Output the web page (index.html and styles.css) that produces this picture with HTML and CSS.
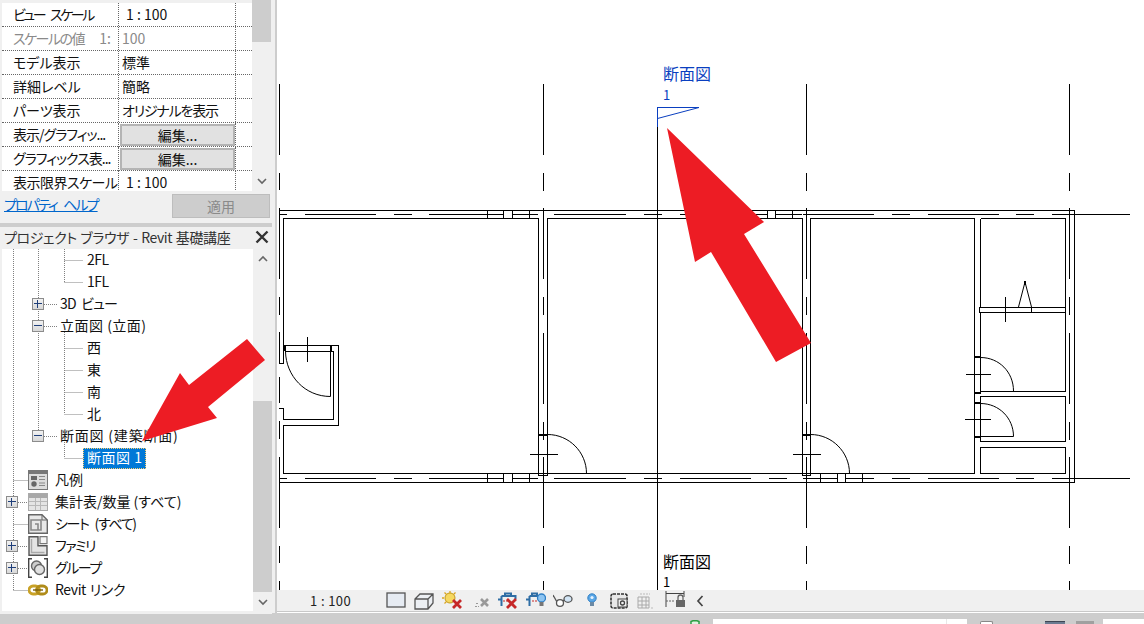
FILE: index.html
```html
<!DOCTYPE html>
<html lang="ja">
<head>
<meta charset="utf-8">
<title>Revit 断面図</title>
<link rel="stylesheet" href="styles.css">
</head>
<body>
<div class="layout">
  <aside class="side">
    <section class="props">
      <div class="prop-table">
        <div class="prop-row"><div class="prop-name ls-w24">ビュー スケール</div><div class="prop-value indent">1 : 100</div><div class="prop-extra"></div></div>
        <div class="prop-row muted"><div class="prop-name split"><span class="ls-15">スケールの値</span><span>1:</span></div><div class="prop-value">100</div><div class="prop-extra"></div></div>
        <div class="prop-row"><div class="prop-name">モデル表示</div><div class="prop-value">標準</div><div class="prop-extra"></div></div>
        <div class="prop-row"><div class="prop-name">詳細レベル</div><div class="prop-value">簡略</div><div class="prop-extra"></div></div>
        <div class="prop-row"><div class="prop-name">パーツ表示</div><div class="prop-value ls-12">オリジナルを表示</div><div class="prop-extra"></div></div>
        <div class="prop-row"><div class="prop-name ls-10">表示/グラフィッ...</div><div class="prop-value cell-btn"><button class="edit-btn">編集...</button></div><div class="prop-extra"></div></div>
        <div class="prop-row"><div class="prop-name ls-10">グラフィックス表...</div><div class="prop-value cell-btn"><button class="edit-btn">編集...</button></div><div class="prop-extra"></div></div>
        <div class="prop-row"><div class="prop-name ls-05">表示限界スケール</div><div class="prop-value indent">1 : 100</div><div class="prop-extra"></div></div>
      </div>
      <div class="prop-scroll">
        <div class="thumb-top"></div>
        <svg class="chev" width="12" height="8" viewBox="0 0 12 8"><path d="M2 2l4 4 4-4" fill="none" stroke="#666" stroke-width="1.6"/></svg>
      </div>
    </section>
    <div class="prop-actions">
      <a class="help-link ls-w18" href="#">プロパティ ヘルプ</a>
      <button class="apply-btn">適用</button>
    </div>
    <div class="divider"></div>
    <header class="browser-title">
      <span class="ls-w03">プロジェクト ブラウザ - Revit 基礎講座</span>
      <svg width="14" height="14" viewBox="0 0 14 14"><path d="M1.5 1.5l11 11M12.5 1.5l-11 11" stroke="#333" stroke-width="2.4"/></svg>
    </header>
    <div class="browser">
      <div class="tree">
        <svg class="connectors" width="251" height="362" viewBox="2 249 251 362">
          <path class="dots" d="M13.5 249V590M13.5 480.5H28M18 502.5H28M13.5 524.5H28M18 546.5H28M18 568.5H28M13.5 590.5H28M38.5 249V430M44 304.5H58M44 326.5H58M44 436.5H58M64.5 249V282M64.5 260.5H83M64.5 282.5H83M64.5 332V414M64.5 348.5H83M64.5 370.5H83M64.5 392.5H83M64.5 414.5H83M64.5 442V458M64.5 458.5H83"/>
        </svg>
        <div class="row lv3"><span class="label ls-05">2FL</span></div>
        <div class="row lv3"><span class="label ls-05">1FL</span></div>
        <div class="row lv2"><i class="box plus"></i><span class="label gap16 ls-w05">3D ビュー</span></div>
        <div class="row lv2"><i class="box minus"></i><span class="label gap16 ls-p5">立面図 (立面)</span></div>
        <div class="row lv3"><span class="label">西</span></div>
        <div class="row lv3"><span class="label">東</span></div>
        <div class="row lv3"><span class="label">南</span></div>
        <div class="row lv3"><span class="label">北</span></div>
        <div class="row lv2"><i class="box minus"></i><span class="label gap16 ls-p8">断面図 (建築断面)</span></div>
        <div class="row lv3sel"><span class="selected ls-p5">断面図 1</span></div>
        <div class="row lv1"><svg class="ticon" width="20" height="20" viewBox="0 0 20 20"><rect x="0.5" y="0.5" width="19" height="19" fill="#dcdcdc" stroke="#777"/><rect x="1" y="1" width="18" height="3" fill="#777"/><rect x="3" y="6" width="6" height="4" fill="#666"/><circle cx="6" cy="14" r="2.700" fill="#666"/><path d="M11 6.500h6M11 9.500h6M11 13h6M11 15.500h6" stroke="#888"/></svg><span class="label gap8">凡例</span></div>
        <div class="row lv0"><i class="box plus"></i><svg class="ticon gap10" width="20" height="20" viewBox="0 0 20 20"><rect x="0.500" y="1.500" width="19" height="17" fill="#e4e4e4" stroke="#aaa"/><rect x="1" y="2" width="18" height="4" fill="#a8a8a8"/><path d="M1 9.500h18M1 13.500h18M7.500 6v12M12.500 6v12" stroke="#b8b8b8"/></svg><span class="label gap8">集計表/数量 (すべて)</span></div>
        <div class="row lv1"><svg class="ticon" width="20" height="20" viewBox="0 0 20 20"><path d="M.7.700H14L19.300 6V19.300H.7Z" fill="#e8e8e8" stroke="#666" stroke-width="1.400"/><path d="M3 6h10v10H3ZM7 10h3v6" fill="none" stroke="#888" stroke-width="1.600"/><path d="M14 1v5h5" fill="none" stroke="#666"/></svg><span class="label gap8 ls-w12">シート (すべて)</span></div>
        <div class="row lv0"><i class="box plus"></i><svg class="ticon gap10" width="20" height="20" viewBox="0 0 20 20"><path d="M1 .7h9v9h9v9.600H1Z" fill="#e4e4e4" stroke="#555" stroke-width="1.400"/><path d="M12 .7h7v7h-7z" fill="#f4f4f4" stroke="#777" stroke-width="1.200"/><path d="M3.500 3v13.500h13" fill="none" stroke="#aaa" stroke-width="1.400"/></svg><span class="label gap8 ls-15">ファミリ</span></div>
        <div class="row lv0"><i class="box plus"></i><svg class="ticon gap10" width="20" height="20" viewBox="0 0 20 20"><path d="M4 .7H.7v18.600H4M16 .7h3.300v18.600H16" fill="none" stroke="#444" stroke-width="1.400"/><circle cx="8.500" cy="8" r="5" fill="#ccc" stroke="#666" stroke-width="1.400"/><circle cx="11.500" cy="11.500" r="5" fill="#e0e0e0" stroke="#666" stroke-width="1.400"/></svg><span class="label gap8 ls-15">グループ</span></div>
        <div class="row lv1"><svg class="ticon" width="20" height="20" viewBox="0 0 20 20"><rect x="1" y="6" width="10.500" height="8" rx="4" fill="none" stroke="#c9a227" stroke-width="2.800"/><rect x="8.500" y="6" width="10.500" height="8" rx="4" fill="none" stroke="#b08c1a" stroke-width="2.800"/><path d="M5 10h10" stroke="#7a5f0c" stroke-width="1.400"/></svg><span class="label gap8 ls-w03">Revit リンク</span></div>
      </div>
      <div class="tree-scroll">
        <div class="tree-btn"><svg width="12" height="8" viewBox="0 0 12 8"><path d="M2 6l4-4 4 4" fill="none" stroke="#666" stroke-width="1.600"/></svg></div>
        <div class="tree-track"><div class="tree-thumb"></div></div>
        <div class="tree-btn"><svg width="12" height="8" viewBox="0 0 12 8"><path d="M2 2l4 4 4-4" fill="none" stroke="#666" stroke-width="1.600"/></svg></div>
      </div>
    </div>
    <svg class="side-arrow" width="272" height="614" viewBox="0 0 272 614"><polygon points="247,339 265,360 208,407 217,418 142,441 180,373 189,385"/></svg>
  </aside>
  <main class="main">
    <svg class="canvas" width="867" height="590" viewBox="277 0 867 590" shape-rendering="crispEdges">
      <g class="grid">
        <path class="plain" d="M279.500 84V155M279.500 173V190M279.500 208V279M279.500 297V315M279.500 332V363M279.500 377V403M279.500 421V439M279.500 457V528M279.500 546V563M279.500 581V590"/>
        <path d="M543.500 84V590M806.500 84V590M1069.500 84V590"/>
      </g>
      <path class="line" d="M279 210.500H1074.500V482.500H279"/>
      <path class="line" d="M280 214.500H287M305 214.500H376M394 214.500H412M429 214.500H503M512 214.500H538M554 214.500H626M644 214.500H662M680 214.500H767M775 214.500H802M803 214.500H874M892 214.500H910M928 214.500H999M1016 214.500H1034M1052 214.500H1130"/>
      <path class="line" d="M280 478.500H287M305 478.500H376M394 478.500H412M429 478.500H503M512 478.500H538M554 478.500H626M644 478.500H662M680 478.500H751M769 478.500H787M803 478.500H837M845 478.500H874M892 478.500H910M928 478.500H999M1016 478.500H1034M1052 478.500H1130"/>
      <path class="line" d="M487.500 210V218M503.500 210V218M512.500 210V218M529.500 210V218M750.500 210V218M767.500 210V218M775.500 210V218M792.500 210V218M487.500 474V482M503.500 474V482M512.500 474V482M529.500 474V482M820.500 474V482M837.500 474V482M845.500 474V482M862.500 474V482"/>
      <path class="line" d="M283.500 346V218.500H538.500V475.500H547.500V218.500H802.500V475.500H810.500V218.500H974.500V473.500H283.500V425.500H338.500V345.500H283.500M283.500 363.500H279M283.500 346V363.500M283.500 408.500H279M283.500 408V419.500H333.500V351.500H285"/>
      <path class="line" d="M980.500 218.500H1065.500V307.500H979V312.500H1065.500V391.500H980.500V312.500M1065.500 307V312M980.500 218.500V307.500M980.500 396.500H1065.500V441.500H980.500ZM980.500 447.500H1065.500V473.500H980.500Z"/>
      <g class="door" shape-rendering="auto">
        <path d="M285.500 351.500C286 376 305 396.500 330.500 396.500V351.500"/>
        <path d="M547.500 434.500C569 434.500 586.500 452 586.500 473.500"/>
        <path d="M810.500 434.500C832 434.500 849.500 452 849.500 473.500"/>
        <path d="M980.500 357.500C999 357.500 1013.500 372 1013.500 391"/>
        <path d="M980.500 403.500C999 403.500 1013.500 418 1013.500 436.500H980.500"/>
        <path d="M1018.500 307L1025 282L1031.500 307V312"/>
      </g>
      <path class="line" d="M307.500 337V362M530 454.500H558M793 454.500H821M966 374.500H991M965 419.500H991M1005.500 297V322"/>
      <path class="thick" d="M285 345V351M331 345V351M538 434.500H548M802 434.500H811M975 356.500H981M975 392.500H981M975 402.500H981M975 436.500H981M1025 281V285"/>
      <path class="line" d="M657.500 127V590"/>
      <path class="section" d="M657.500 127V107.500H699"/>
      <path class="section" shape-rendering="auto" d="M657.500 118.500L699 107.500"/>
      <text class="sec-label blue" x="663" y="80">断面図</text>
      <text class="sec-num blue" x="663" y="100">1</text>
      <text class="sec-label" x="663" y="568">断面図</text>
      <text class="sec-num" x="663" y="587">1</text>
      <polygon class="red" shape-rendering="auto" points="667,128 764,222 744,234 811,343 776,362 711,252 695,262"/>
    </svg>
    <div class="viewbar">
      <span class="scale">1 : 100</span>
      <svg class="vi m30" width="20" height="20" viewBox="0 0 20 20"><rect x="1" y="2" width="18" height="14" fill="#e6ebf2" stroke="#555" stroke-width="1.300"/></svg>
      <svg class="vi m8" width="20" height="20" viewBox="0 0 20 20"><path d="M1 8l5-5h13v9l-5 6H1ZM1 8h13v10M14 8l5-5" fill="#eceff3" stroke="#555" stroke-width="1.300"/></svg>
      <svg class="vi m8" width="20" height="20" viewBox="0 0 20 20"><circle cx="8" cy="7" r="5" fill="#f6d860" stroke="#c49a1c"/><path d="M8 0v2M0 7h2M2.500 1.500l2 2M13.500 1.500l-2 2M2.500 12.500l2-2" stroke="#d9a520" stroke-width="1.300"/><path d="M11 9l8 8M19 9l-8 8" stroke="#c62828" stroke-width="2.800"/></svg>
      <svg class="vi m12" width="16" height="20" viewBox="0 0 16 20"><path d="M1 15.500h4M2 12.500h3" stroke="#999" stroke-dasharray="2 1"/><path d="M7 8l7 7M14 8l-7 7" stroke="#999" stroke-width="2.600"/></svg>
      <svg class="vi m8" width="20" height="20" viewBox="0 0 20 20"><path d="M0 8.500h4M3.500 5h14v3M3.500 5v10M7 5V2.500h6V5" fill="none" stroke="#2f6ea5" stroke-width="2"/><path d="M5 10h5" stroke="#c62828" stroke-dasharray="2 1"/><path d="M9 8l9 9M18 8l-9 9" stroke="#c62828" stroke-width="2.800"/></svg>
      <svg class="vi m8" width="20" height="20" viewBox="0 0 20 20"><path d="M0 8.500h4M3.500 5h10M3.500 5v10M6 5V2.500h5V5" fill="none" stroke="#2f6ea5" stroke-width="2"/><path d="M6 10h6" stroke="#c62828" stroke-dasharray="2 1"/><circle cx="15.500" cy="7" r="4" fill="#8ec5f2" stroke="#2f7fc5" stroke-width="1.300"/><rect x="13.500" y="11" width="4" height="4" fill="#777"/></svg>
      <svg class="vi m7" width="20" height="20" viewBox="0 0 20 20"><path d="M0 4l4 7" stroke="#555" stroke-width="1.300"/><ellipse cx="7" cy="12" rx="3.500" ry="3.300" fill="#fff" stroke="#555" stroke-width="1.300"/><path d="M10 10l4-3" stroke="#555" stroke-width="1.300"/><ellipse cx="15" cy="8" rx="4" ry="3.300" fill="#d3e6f6" stroke="#555" stroke-width="1.300"/></svg>
      <svg class="vi m14" width="10" height="20" viewBox="0 0 10 20"><circle cx="5" cy="7" r="4.200" fill="#5ba7e6" stroke="#2f7fc5"/><circle cx="5" cy="6.500" r="1.600" fill="#e4f2ff"/><rect x="3" y="11" width="4" height="4" fill="#6c8aa5"/></svg>
      <svg class="vi m13" width="18" height="20" viewBox="0 0 18 20"><rect x="1" y="3" width="16" height="14" rx="2" fill="#e8e8e8" stroke="#333" stroke-width="1.600" stroke-dasharray="3 1"/><rect x="8" y="8" width="9" height="8" fill="#f2f2f2" stroke="#444"/><circle cx="12.500" cy="12" r="2" fill="none" stroke="#444" stroke-width="1.300"/></svg>
      <svg class="vi m9" width="16" height="20" viewBox="0 0 16 20"><path d="M1 6h11v11H1ZM1 10h11M1 14h11M5 6v11M9 6v11" fill="none" stroke="#aaa"/><path d="M3 3h10M14 17h2" stroke="#bbb" stroke-dasharray="2 1"/></svg>
      <svg class="vi m12" width="20" height="20" viewBox="0 0 20 20"><path d="M1 0v16M19 0v6M1 2.500h18" fill="none" stroke="#444"/><path d="M1 10h8" stroke="#666" stroke-dasharray="2 1"/><rect x="11" y="9" width="9" height="7" fill="#666"/><path d="M13 9V6.500a2.500 2.500 0 0 1 5 0V9" fill="none" stroke="#666" stroke-width="1.300"/></svg>
      <svg class="vi m11" width="8" height="20" viewBox="0 0 8 20"><path d="M6.500 5L2 10l4.500 5" fill="none" stroke="#444" stroke-width="1.700"/></svg>
    </div>
    <div class="viewbar-edge"></div>
  </main>
</div>
<footer class="status">
  <svg class="status-ok" width="10" height="5" viewBox="0 0 10 5"><path d="M1 5V1.500L3 .7h4l2 .8V5" fill="#dff3df" stroke="#2f9e44" stroke-width="1.500"/></svg>
  <div class="status-field"><div class="status-divider"></div></div>
  <div class="status-chip white"></div>
  <div class="status-chip dark"></div>
  <div class="status-chip gray"></div>
  <div class="status-end"></div>
</footer>
</body>
</html>
```
FILE: styles.css
```css
* { box-sizing: border-box; }
html, body { margin: 0; padding: 0; }
body {
  width: 1144px;
  height: 624px;
  overflow: hidden;
  background: #cdcdcd;
  color: #111;
  font-family: "Noto Sans CJK JP", "Noto Sans", sans-serif;
  font-size: 14px;
  font-feature-settings: "palt";
}
.layout { display: flex; height: 613px; background: #f0f0f0; }
.ls-w24 { letter-spacing: -2.4px; word-spacing: 5px; }
.ls-w18 { letter-spacing: -1.9px; word-spacing: 5px; }
.ls-w12 { letter-spacing: -1.3px; word-spacing: 4px; }
.ls-w05 { letter-spacing: -.8px; word-spacing: 3px; }
.ls-w03 { letter-spacing: -.4px; word-spacing: 1px; }
.ls-15 { letter-spacing: -1.5px; }
.ls-12 { letter-spacing: -1.2px; }
.ls-10 { letter-spacing: -1px; }
.ls-05 { letter-spacing: -.5px; }
.ls-p5 { letter-spacing: .5px; }
.ls-p8 { letter-spacing: .8px; }

/* left column */
.side {
  position: relative;
  width: 272px;
  height: 614px;
  background: #f0f0f0;
  display: flex;
  flex-direction: column;
  flex: none;
}
.props { display: flex; height: 191px; padding-left: 2px; }
.prop-table { width: 250px; height: 191px; padding-top: 3px; overflow: hidden; }
.prop-row {
  display: grid;
  grid-template-columns: 116px 117px 17px;
  height: 24px;
  background: #fff;
  border-bottom: 1px dotted #666;
  line-height: 23px;
  white-space: nowrap;
}
.prop-name { padding-left: 11px; }
.prop-value { padding-left: 3px; border-left: 1px dotted #666; }
.prop-extra { border-left: 1px dotted #666; }
.indent { padding-left: 7px; }
.muted { color: #8a8a8a; }
.split { display: flex; justify-content: space-between; padding-right: 7px; }
.cell-btn { padding: 1px; }
.edit-btn {
  display: block;
  width: 115px;
  height: 22px;
  margin: 0;
  padding: 0;
  background: #e1e1e1;
  border: 2px solid #b4b4b4;
  color: #111;
  font: inherit;
  line-height: 18px;
}
.prop-scroll {
  width: 19px;
  height: 191px;
  display: flex;
  flex-direction: column;
  align-items: center;
  justify-content: space-between;
  padding-bottom: 6px;
}
.thumb-top { width: 19px; height: 42px; background: #cdcdcd; }
.prop-actions {
  height: 32px;
  display: flex;
  align-items: flex-start;
  justify-content: space-between;
  padding: 3px 2px 0 4px;
}
.help-link { color: #0066cc; text-decoration: underline; line-height: 20px; }
.apply-btn {
  width: 98px;
  height: 24px;
  margin: 0;
  padding: 0;
  background: #cdcdcd;
  border: 1px solid #bdbdbd;
  color: #8a8a8a;
  font: inherit;
}
.divider { height: 4px; background: #cdcdcd; }
.browser-title {
  height: 22px;
  padding: 0 3px 2px 4px;
  display: flex;
  align-items: center;
  justify-content: space-between;
  color: #333;
  white-space: nowrap;
}
.browser { display: flex; height: 362px; padding-left: 2px; }
.tree { position: relative; width: 251px; height: 362px; background: #fff; }
.connectors { position: absolute; left: 0; top: 0; }
.dots { fill: none; stroke: #808080; stroke-dasharray: 1 1; }
.row { position: relative; height: 22px; display: flex; align-items: center; white-space: nowrap; }
.label { margin-bottom: 2px; }
.lv0 { padding-left: 4px; }
.lv1 { padding-left: 26px; }
.lv2 { padding-left: 30px; }
.lv3 { padding-left: 85px; }
.lv3sel { padding-left: 81px; }
.selected {
  display: block;
  height: 21px;
  line-height: 19px;
  padding: 0 4px;
  background: #0078d7;
  color: #fff;
  outline: 1px dotted #ffcf6e;
  outline-offset: -1px;
}
.box {
  display: block;
  position: relative;
  width: 12px;
  height: 12px;
  background: linear-gradient(#f2f2f2, #d8d8d8);
  border: 1px solid #8c8c8c;
  flex: none;
}
.box::before {
  content: "";
  position: absolute;
  left: 1px;
  top: 4px;
  width: 8px;
  height: 2px;
  border-top: 1px solid #1f3f7a;
}
.plus::after {
  content: "";
  position: absolute;
  left: 4px;
  top: 1px;
  width: 1px;
  height: 8px;
  background: #1f3f7a;
}
.ticon { flex: none; }
.gap8 { margin-left: 7px; }
.gap10 { margin-left: 10px; }
.gap16 { margin-left: 16px; }
.tree-scroll { width: 19px; height: 362px; display: flex; flex-direction: column; }
.tree-btn { height: 19px; display: flex; align-items: center; justify-content: center; flex: none; }
.tree-track { flex: 1; padding-top: 133px; }
.tree-thumb { width: 19px; height: 191px; background: #cdcdcd; }
.side-arrow { position: absolute; left: 0; top: 0; pointer-events: none; }
.side-arrow polygon { fill: #ed1c24; }

/* drawing canvas */
.main {
  width: 869px;
  height: 613px;
  flex: none;
  margin-left: 3px;
  border-left: 2px solid #cdcdcd;
  background: #f0f0f0;
}
.canvas { display: block; background: #fff; }
.line { fill: none; stroke: #000; stroke-width: 1; }
.grid path { fill: none; stroke: #000; stroke-width: 1; stroke-dasharray: 71 18 18 17.25; }
.grid .plain { stroke-dasharray: none; }
.door path { fill: none; stroke: #000; stroke-width: 1; }
.thick { fill: none; stroke: #000; stroke-width: 2; }
.section { fill: none; stroke: #0a3fc0; stroke-width: 1; }
.sec-label { font-size: 16px; fill: #000; }
.sec-num { font-size: 13px; fill: #000; }
.blue { fill: #0a3fc0; }
.red { fill: #ed1c24; }
.viewbar {
  height: 21px;
  background: #f0f0f0;
  display: flex;
  align-items: center;
  padding-left: 33px;
}
.scale { font-size: 13px; letter-spacing: .4px; width: 46px; white-space: nowrap; color: #222; }
.vi { flex: none; }
.m7 { margin-left: 7px; }
.m8 { margin-left: 8px; }
.m9 { margin-left: 9px; }
.m11 { margin-left: 11px; }
.m12 { margin-left: 12px; }
.m13 { margin-left: 13px; }
.m14 { margin-left: 14px; }
.m30 { margin-left: 30px; }
.viewbar-edge { height: 2px; background: linear-gradient(#c8c8c8 50%, #fff 50%); }

/* status */
.status { display: flex; align-items: flex-start; height: 11px; padding: 6px 0 0 690px; }
.status-ok { margin-top: 1px; flex: none; }
.status-field { width: 254px; height: 5px; margin-left: 13px; background: #fff; position: relative; }
.status-divider { position: absolute; left: 233px; top: 0; width: 1px; height: 5px; background: #e8e8e8; }
.status-chip { height: 3px; margin-top: 2px; flex: none; }
.white { width: 13px; margin-left: 13px; background: #fff; border: 1px solid #888; border-bottom: 0; border-radius: 2px 2px 0 0; }
.dark { width: 20px; margin-left: 52px; background: linear-gradient(#3e4654 33%, #6a7a90 33%); }
.gray { width: 18px; margin-left: 11px; background: #a0a0a0; }
.status-end { width: 41px; height: 5px; margin-left: 9px; background: #fff; }
```
